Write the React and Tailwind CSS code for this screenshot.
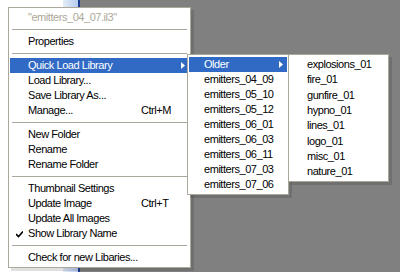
import React from 'react';

const font = { fontFamily: '"Liberation Sans", Arial, sans-serif' };

const Arrow = ({ white }) => (
  <svg width="4" height="7" viewBox="0 0 4 7" className="absolute right-[4px] top-[4px]">
    <path d="M0 0 L4 3.5 L0 7 Z" fill={white ? '#ffffff' : '#000000'} />
  </svg>
);

const Sep = () => (
  <div className="h-[9px] flex items-center px-[2px]">
    <div className="h-px w-full bg-[#aca899]" />
  </div>
);

const Item = ({ label, shortcut, active, disabled, checked, arrow, indent = 'pl-[18px]', tall }) => (
  <div
    className={`relative ${tall ? 'h-[15.3px]' : 'h-[15px]'} flex items-center ${indent} pr-[14px] text-[11px] tracking-[-0.45px] leading-none whitespace-nowrap ${
      active ? 'bg-[#316ac5] text-white' : disabled ? 'text-[#aca899]' : 'text-black'
    }`}
  >
    {checked && (
      <svg width="7" height="7" viewBox="0 0 7 7" className="absolute left-[6px] top-[5px]">
        <path d="M0 3 L2.5 5.5 L7 0.5" stroke="#000" strokeWidth="1.6" fill="none" />
      </svg>
    )}
    <span className="flex-1">{label}</span>
    {shortcut && <span className="w-[34px]">{shortcut}</span>}
    {arrow && <Arrow white={active} />}
  </div>
);

export default function App() {
  return (
    <div className="relative w-[400px] h-[272px] overflow-hidden" style={font}>
      <div className="flex h-full">
        <div className="w-[63px] bg-white" />
        <div className="w-[15px] bg-gradient-to-r from-[#e4ecf8] to-[#b8ccee]" />
        <div className="w-[2px] bg-[#1c3c94]" />
        <div className="flex-1 bg-[#808080]" />
      </div>

      {/* main menu */}
      <div className="absolute left-[8px] top-[7px] w-[183px] bg-white border border-[#aca899] py-[2px] px-px shadow-[3px_3px_0_rgba(0,0,0,0.12)]">
        <Item label={'"emitters_04_07.il3"'} disabled />
        <Sep />
        <Item label="Properties" />
        <Sep />
        <Item label="Quick Load Library" active arrow />
        <Item label="Load Library..." />
        <Item label="Save Library As..." />
        <Item label="Manage..." shortcut="Ctrl+M" />
        <Sep />
        <Item label="New Folder" />
        <Item label="Rename" />
        <Item label="Rename Folder" />
        <Sep />
        <Item label="Thumbnail Settings" />
        <Item label="Update Image" shortcut="Ctrl+T" />
        <Item label="Update All Images" />
        <Item label="Show Library Name" checked />
        <Sep />
        <Item label="Check for new Libaries..." />
      </div>

      {/* submenu 1 */}
      <div className="absolute left-[187px] top-[54px] w-[102px] bg-white border border-[#aca899] py-[2px] px-px shadow-[3px_3px_0_rgba(0,0,0,0.12)]">
        <Item label="Older" active arrow indent="pl-[15px]" />
        {['emitters_04_09', 'emitters_05_10', 'emitters_05_12', 'emitters_06_01', 'emitters_06_03', 'emitters_06_11', 'emitters_07_03', 'emitters_07_06'].map((n) => (
          <Item key={n} label={n} indent="pl-[15px]" />
        ))}
      </div>

      {/* submenu 2 */}
      <div className="absolute left-[288px] top-[54px] w-[101px] bg-white border border-[#aca899] py-[2px] px-px shadow-[3px_3px_0_rgba(0,0,0,0.12)]">
        {['explosions_01', 'fire_01', 'gunfire_01', 'hypno_01', 'lines_01', 'logo_01', 'misc_01', 'nature_01'].map((n) => (
          <Item key={n} label={n} indent="pl-[17px]" tall />
        ))}
      </div>
    </div>
  );
}
